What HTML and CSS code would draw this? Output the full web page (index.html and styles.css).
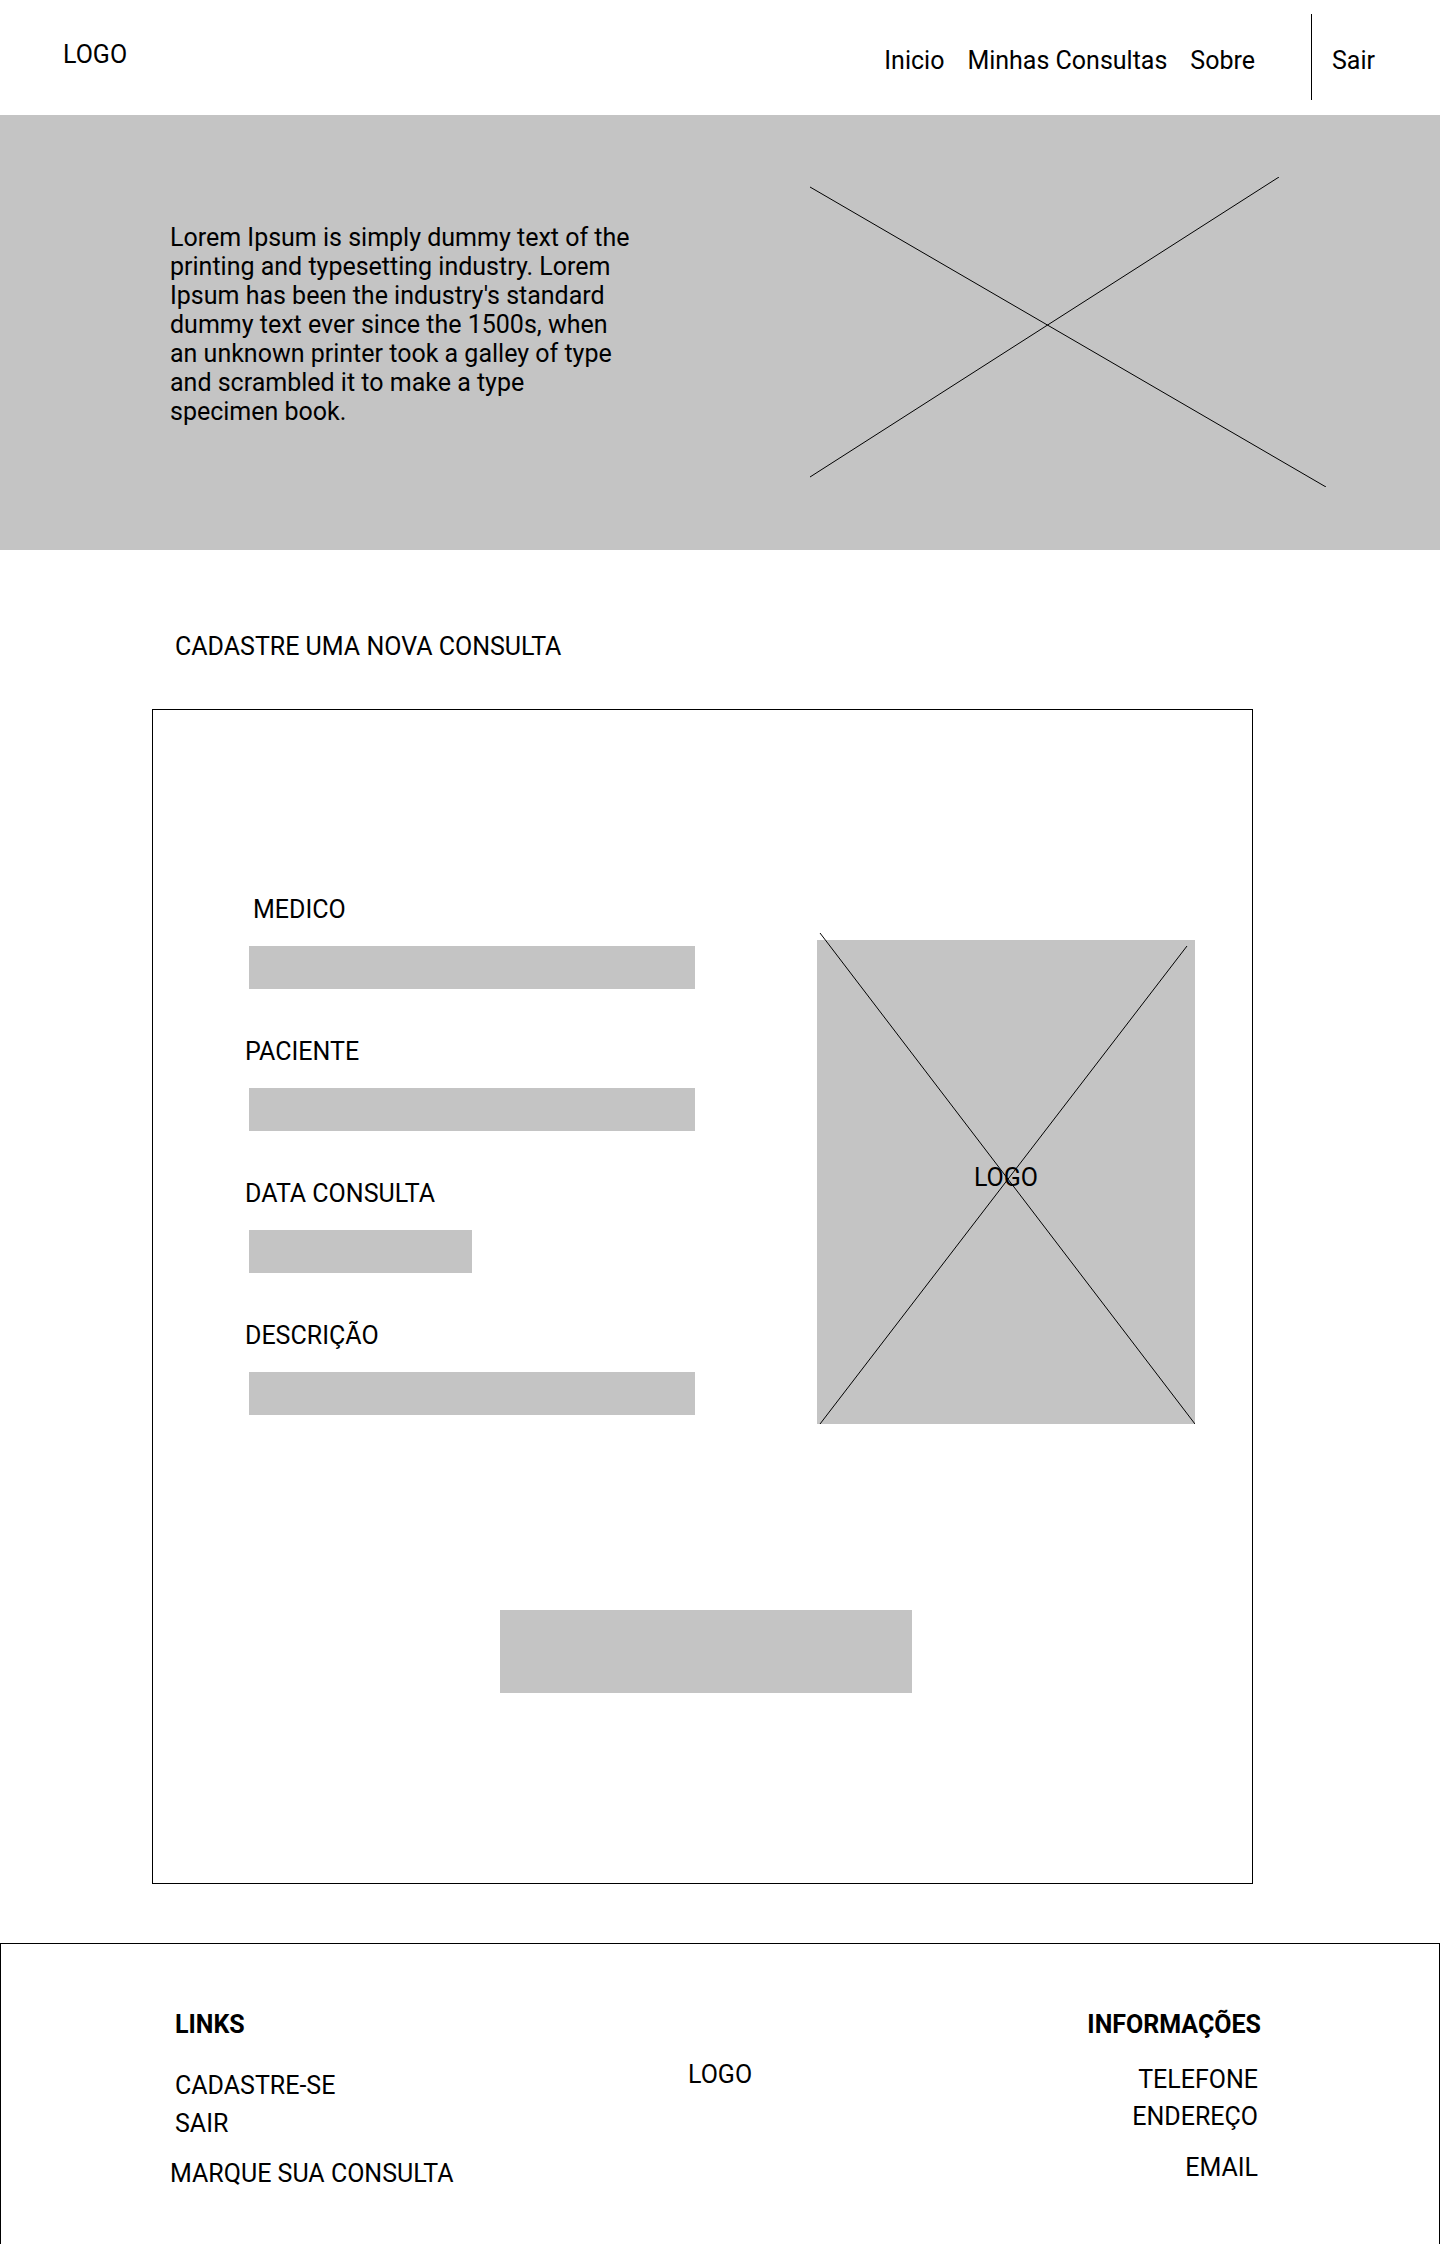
FILE: index.html
```html
<!DOCTYPE html>
<html lang="pt-BR">
<head>
<meta charset="utf-8">
<title>Cadastre uma nova consulta</title>
<link rel="stylesheet" href="styles.css">
</head>
<body>
<header class="topbar">
  <div class="logo">LOGO</div>
  <nav class="nav">
    <a class="nav-link">Inicio</a>
    <a class="nav-link">Minhas Consultas</a>
    <a class="nav-link">Sobre</a>
  </nav>
  <div class="divider"></div>
  <a class="nav-link sair">Sair</a>
</header>

<section class="hero">
  <p class="hero-text">Lorem Ipsum is simply dummy text of the printing and typesetting industry. Lorem Ipsum has been the industry's standard dummy text ever since the 1500s, when an unknown printer took a galley of type and scrambled it to make a type specimen book.</p>
  <svg class="hero-img" width="516" height="310" viewBox="0 0 516 310">
    <line x1="0" y1="10" x2="516" y2="310" stroke="#000" stroke-width="1"/>
    <line x1="0" y1="300" x2="469" y2="0" stroke="#000" stroke-width="1"/>
  </svg>
</section>

<h2 class="section-title">CADASTRE UMA NOVA CONSULTA</h2>

<form class="form-box">
  <div class="form-row">
    <div class="fields">
      <div class="field">
        <label class="label label-indent">MEDICO</label>
        <div class="input"></div>
      </div>
      <div class="field">
        <label class="label">PACIENTE</label>
        <div class="input"></div>
      </div>
      <div class="field">
        <label class="label">DATA CONSULTA</label>
        <div class="input input-short"></div>
      </div>
      <div class="field">
        <label class="label">DESCRIÇÃO</label>
        <div class="input"></div>
      </div>
    </div>
    <div class="picture">
      <svg width="378" height="491" viewBox="0 0 378 491">
        <rect x="0" y="7" width="378" height="484" fill="#C4C4C4"/>
        <line x1="3" y1="0" x2="378" y2="491" stroke="#000" stroke-width="1"/>
        <line x1="3" y1="491" x2="370" y2="13" stroke="#000" stroke-width="1"/>
      </svg>
      <span class="picture-label">LOGO</span>
    </div>
  </div>
  <div class="button"></div>
</form>

<footer class="footer">
  <div class="foot-col foot-links">
    <div class="foot-title pad">LINKS</div>
    <div class="foot-item pad cad">CADASTRE-SE</div>
    <div class="foot-item pad sair-item">SAIR</div>
    <div class="foot-item marque">MARQUE SUA CONSULTA</div>
  </div>
  <div class="foot-logo">LOGO</div>
  <div class="foot-col foot-info">
    <div class="foot-title">INFORMAÇÕES</div>
    <div class="foot-item rpad tel">TELEFONE</div>
    <div class="foot-item rpad end">ENDEREÇO</div>
    <div class="foot-item rpad email">EMAIL</div>
  </div>
</footer>
</body>
</html>
```

FILE: styles.css
```css
* { box-sizing: border-box; }
html, body { margin: 0; padding: 0; }
body {
  font-family: Roboto, "Liberation Sans", Arial, sans-serif;
  font-size: 25px;
  color: #000;
  background: #fff;
  width: 1440px;
  overflow: hidden;
}

/* header */
.topbar {
  height: 115px;
  display: flex;
  align-items: flex-start;
  padding-left: 63px;
}
.logo {
  font-size: 25px;
  line-height: 28px;
  margin-top: 41px;
}
.nav {
  margin-left: auto;
  display: flex;
  gap: 23px;
  margin-top: 46px;
}
.nav-link {
  font-size: 25px;
  line-height: 30px;
  color: #000;
  text-decoration: none;
}
.divider {
  width: 1px;
  height: 86px;
  background: #000;
  margin-top: 14px;
  margin-left: 56px;
}
.sair {
  margin-top: 46px;
  margin-left: 20px;
  margin-right: 65px;
}

/* hero */
.hero {
  height: 435px;
  background: #C4C4C4;
  display: flex;
  align-items: flex-start;
  padding-left: 170px;
}
.hero-text {
  margin: 108px 0 0 0;
  width: 468px;
  font-size: 25px;
  line-height: 29px;
}
.hero-img {
  display: block;
  margin-left: 172px;
  margin-top: 62px;
}

/* section title */
.section-title {
  margin: 83px 0 0 0;
  padding-left: 175px;
  font-size: 25px;
  line-height: 28px;
  font-weight: 400;
}

/* form */
.form-box {
  margin: 48px 0 0 152px;
  width: 1101px;
  height: 1175px;
  border: 1px solid #000;
  padding-top: 186px;
}
.form-row {
  display: flex;
  align-items: flex-start;
  padding-left: 92px;
}
.fields {
  width: 450px;
  display: flex;
  flex-direction: column;
  gap: 49px;
}
.field {
  display: flex;
  flex-direction: column;
}
.label {
  font-size: 25px;
  line-height: 28px;
}
.label-indent { padding-left: 8px; }
.input {
  margin-top: 22px;
  margin-left: 4px;
  width: 446px;
  height: 43px;
  background: #C4C4C4;
}
.input-short { width: 223px; }

.picture {
  position: relative;
  margin-left: 122px;
  margin-top: 37px;
  width: 378px;
  height: 491px;
}
.picture svg { display: block; }
.picture-label {
  position: absolute;
  left: 0;
  right: 0;
  top: 231px;
  text-align: center;
  font-size: 25px;
  line-height: 28px;
}

.button {
  margin: 186px 0 0 347px;
  width: 412px;
  height: 83px;
  background: #C4C4C4;
}

/* footer */
.footer {
  margin-top: 59px;
  height: 320px;
  border: 1px solid #000;
  display: flex;
  align-items: flex-start;
  padding: 67px 178px 0 169px;
}
.foot-col {
  display: flex;
  flex-direction: column;
}
.foot-links { width: 518px; }
.foot-title {
  font-size: 25px;
  line-height: 28px;
  font-weight: 700;
}
.foot-item {
  font-size: 25px;
  line-height: 28px;
}
.pad { padding-left: 5px; }
.cad { margin-top: 33px; }
.sair-item { margin-top: 10px; }
.marque { margin-top: 22px; }
.foot-logo {
  font-size: 25px;
  line-height: 28px;
  margin-top: 50px;
}
.foot-info {
  margin-left: auto;
  align-items: flex-end;
  text-align: right;
}
.rpad { padding-right: 3px; }
.tel { margin-top: 27px; }
.end { margin-top: 9px; }
.email { margin-top: 23px; }
```
